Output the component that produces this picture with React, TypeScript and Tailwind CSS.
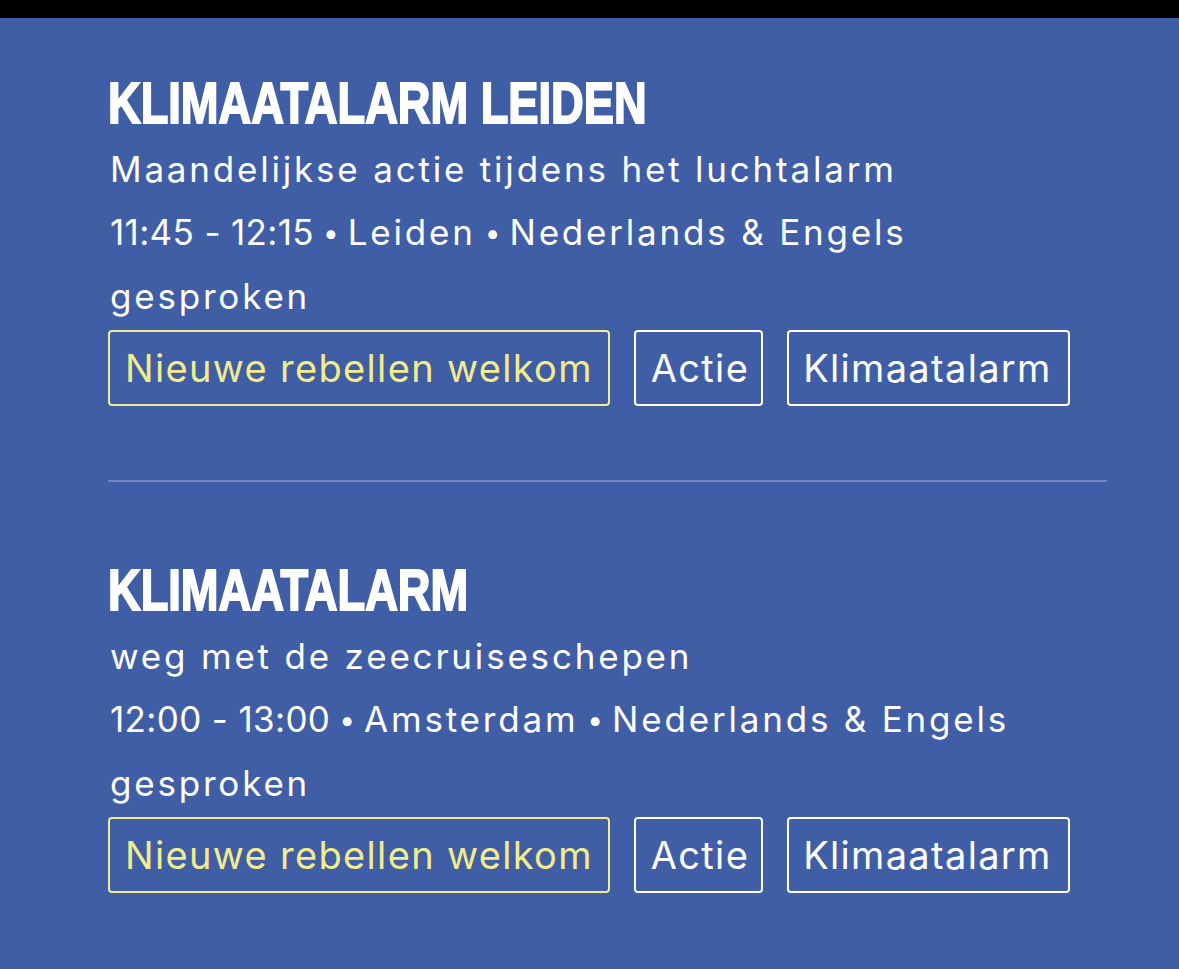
import React from "react";

type Ev = { title: string; desc: string; time: string; place: string; lang: string; tail: string };

const events: Ev[] = [
  {
    title: "KLIMAATALARM LEIDEN",
    desc: "Maandelijkse actie tijdens het luchtalarm",
    time: "11:45 - 12:15",
    place: "Leiden",
    lang: "Nederlands & Engels ",
    tail: "gesproken",
  },
  {
    title: "KLIMAATALARM",
    desc: "weg met de zeecruiseschepen",
    time: "12:00 - 13:00",
    place: "Amsterdam",
    lang: "Nederlands & Engels ",
    tail: "gesproken",
  },
];

function Dot() {
  return <span className="tracking-normal text-[28px] align-[2px] mx-[9px]">•</span>;
}

function Event({ ev }: { ev: Ev }) {
  return (
    <div>
      <h2 className="text-[58px] leading-[58px] font-bold text-white font-['Liberation_Sans',sans-serif] origin-left scale-x-[0.78] whitespace-nowrap [-webkit-text-stroke:2px_white]">
        {ev.title}
      </h2>
      <div className="mt-[6px] w-[960px] text-white text-[35px] leading-[63px] tracking-[0.08em] font-['Inter',sans-serif] pl-[2px]">
        <p>
          <span>{ev.desc}</span>
        </p>
        <p>
          <span className="tracking-[0.01em]">{ev.time}</span>
          <Dot />
          <span>{ev.place}</span>
          <Dot />
          <span>{ev.lang}</span>
          <span>{ev.tail}</span>
        </p>
      </div>
      <div className="mt-[2px] flex gap-6 font-['Inter',sans-serif] text-[38px] leading-[72px] tracking-[0.035em]">
        <span className="border-2 border-[#f3ec8a] text-[#f3ec8a] rounded-[4px] px-[15px]">
          Nieuwe rebellen welkom
        </span>
        <span className="border-2 border-white text-white rounded-[4px] pl-[15px] pr-[12px]">
          Actie
        </span>
        <span className="border-2 border-white text-white rounded-[4px] pl-[14px] pr-[16px]">
          Klimaatalarm
        </span>
      </div>
    </div>
  );
}

export default function App() {
  return (
    <div className="w-[1179px] h-[969px] bg-[#405ea5] overflow-hidden">
      <div className="h-[18px] bg-black" />
      <div className="pl-[108px] pr-[72px] pt-[56px]">
        <div className="pb-[74px]">
          <Event ev={events[0]} />
        </div>
        <div className="h-[2px] bg-[#7088c0]" />
        <div className="pt-[79px]">
          <Event ev={events[1]} />
        </div>
      </div>
    </div>
  );
}
